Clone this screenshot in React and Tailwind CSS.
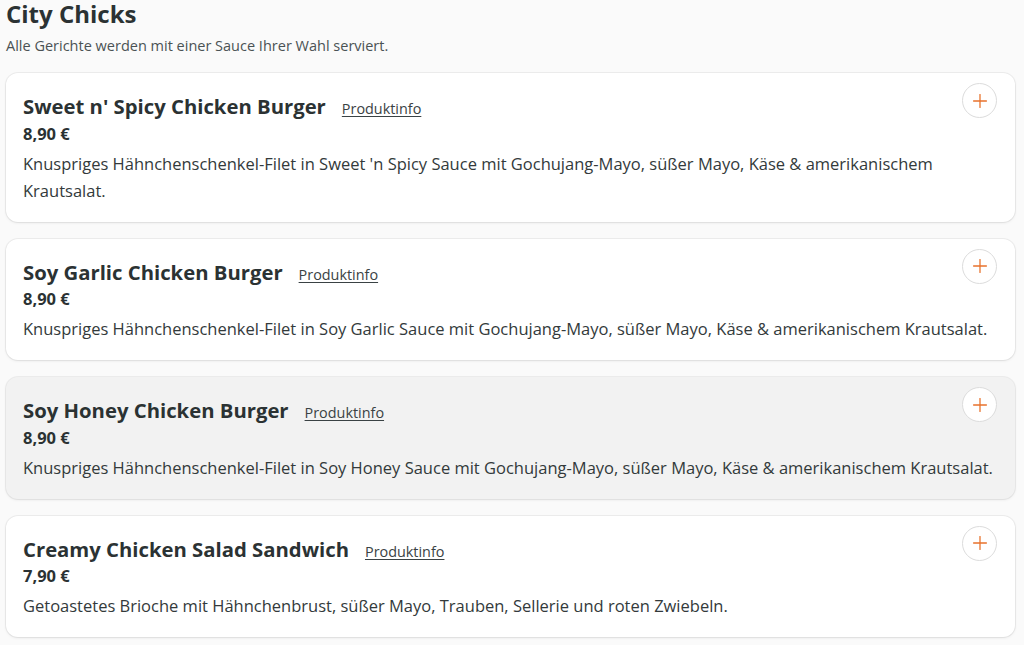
import { Plus } from "lucide-react";

const ITEMS = [
  {
    id: "sweet-spicy",
    title: "Sweet n' Spicy Chicken Burger",
    price: "8,90 €",
    description:
      "Knuspriges Hähnchenschenkel-Filet in Sweet 'n Spicy Sauce mit Gochujang-Mayo, süßer Mayo, Käse & amerikanischem Krautsalat.",
  },
  {
    id: "soy-garlic",
    title: "Soy Garlic Chicken Burger",
    price: "8,90 €",
    description:
      "Knuspriges Hähnchenschenkel-Filet in Soy Garlic Sauce mit Gochujang-Mayo, süßer Mayo, Käse & amerikanischem Krautsalat.",
  },
  {
    id: "soy-honey",
    title: "Soy Honey Chicken Burger",
    price: "8,90 €",
    description:
      "Knuspriges Hähnchenschenkel-Filet in Soy Honey Sauce mit Gochujang-Mayo, süßer Mayo, Käse & amerikanischem Krautsalat.",
    hovered: true,
  },
  {
    id: "creamy-salad",
    title: "Creamy Chicken Salad Sandwich",
    price: "7,90 €",
    description:
      "Getoastetes Brioche mit Hähnchenbrust, süßer Mayo, Trauben, Sellerie und roten Zwiebeln.",
  },
];

const App = () => {
  return (
    <div className="h-[645px] overflow-hidden bg-[#fafafa] px-[6px] text-[#2b3233] font-['Open_Sans',sans-serif]">
      <h2 className="pt-[1px] text-[24px] font-bold leading-[26px]">City Chicks</h2>
      <p className="mt-[9px] text-[14.5px] leading-[20px] text-[#4a5254]">
        Alle Gerichte werden mit einer Sauce Ihrer Wahl serviert.
      </p>

      <div className="mt-[17px] flex w-[1009px] flex-col gap-[17px]">
        {ITEMS.map((item) => (
          <div
            key={item.id}
            className={`relative rounded-[12px] pl-[17px] pr-[12px] pt-[20px] pb-[18px] shadow-[0_0_0_1px_rgba(0,0,0,0.05),0_1px_3px_rgba(0,0,0,0.08)] ${
              item.hovered ? "bg-[#f2f2f2]" : "bg-white"
            }`}
          >
            <div className="flex items-baseline gap-[16px]">
              <h3 className="text-[20.3px] font-bold leading-[26px]">{item.title}</h3>
              <a className="text-[14.4px] text-[#3a4244] underline underline-offset-2">
                Produktinfo
              </a>
            </div>
            <p className="mt-[3px] text-[16.5px] font-bold leading-[22px]">{item.price}</p>
            <p className="mt-[5px] text-[16.5px] leading-[27px] text-[#333a3b]">
              {item.description}
            </p>
            <button className="absolute right-[18px] top-[10px] flex h-[35px] w-[35px] items-center justify-center rounded-full border border-[#dcdcdc] bg-white">
              <Plus size={22} strokeWidth={1.4} className="text-[#e8722c]" />
            </button>
          </div>
        ))}
      </div>
    </div>
  );
};

export default App;
